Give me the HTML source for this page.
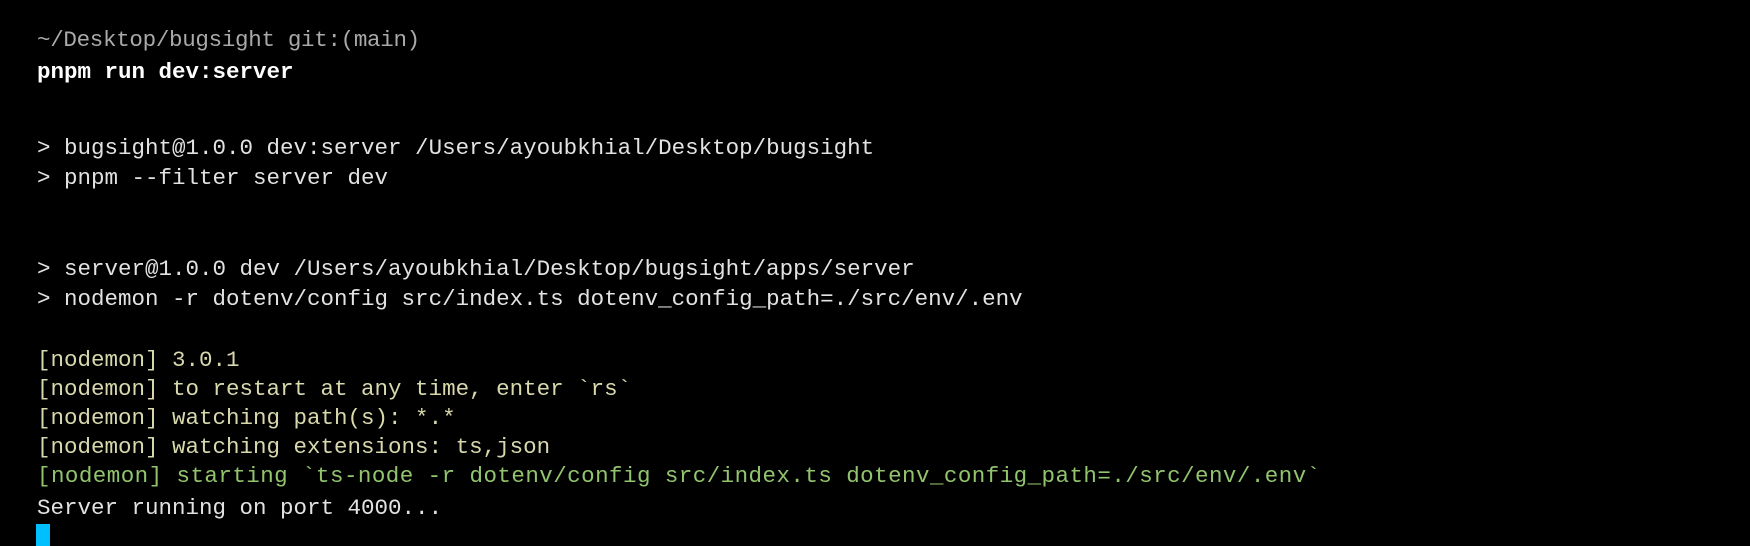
<!DOCTYPE html>
<html><head><style>
body{margin:0;width:1750px;height:546px;background:#000;overflow:hidden;font-family:"Liberation Mono","DejaVu Sans Mono",monospace;font-size:22.5px;}
.l{position:absolute;left:37px;height:30px;line-height:30px;white-space:pre;color:#e2e2e2;}
.g{color:#a9a9a9;letter-spacing:-0.3px}.b{color:#fff;font-weight:bold}.y{color:#d8d8ad}.gr{color:#92c46e;letter-spacing:0.45px}
.cur{position:absolute;left:36px;top:524px;width:14px;height:22px;background:#00bfff}
</style></head><body>
<div class="l g" style="top:25px">~/Desktop/bugsight git:(main)</div>
<div class="l b" style="top:57px">pnpm run dev:server</div>
<div class="l" style="top:133px">&gt; bugsight@1.0.0 dev:server /Users/ayoubkhial/Desktop/bugsight</div>
<div class="l" style="top:163px">&gt; pnpm --filter server dev</div>
<div class="l" style="top:254px">&gt; server@1.0.0 dev /Users/ayoubkhial/Desktop/bugsight/apps/server</div>
<div class="l" style="top:284px">&gt; nodemon -r dotenv/config src/index.ts dotenv_config_path=./src/env/.env</div>
<div class="l y" style="top:345px">[nodemon] 3.0.1</div>
<div class="l y" style="top:374px">[nodemon] to restart at any time, enter `rs`</div>
<div class="l y" style="top:403px">[nodemon] watching path(s): *.*</div>
<div class="l y" style="top:432px">[nodemon] watching extensions: ts,json</div>
<div class="l gr" style="top:461px">[nodemon] starting `ts-node -r dotenv/config src/index.ts dotenv_config_path=./src/env/.env`</div>
<div class="l" style="top:493px">Server running on port 4000...</div>
<div class="cur"></div>
</body></html>
